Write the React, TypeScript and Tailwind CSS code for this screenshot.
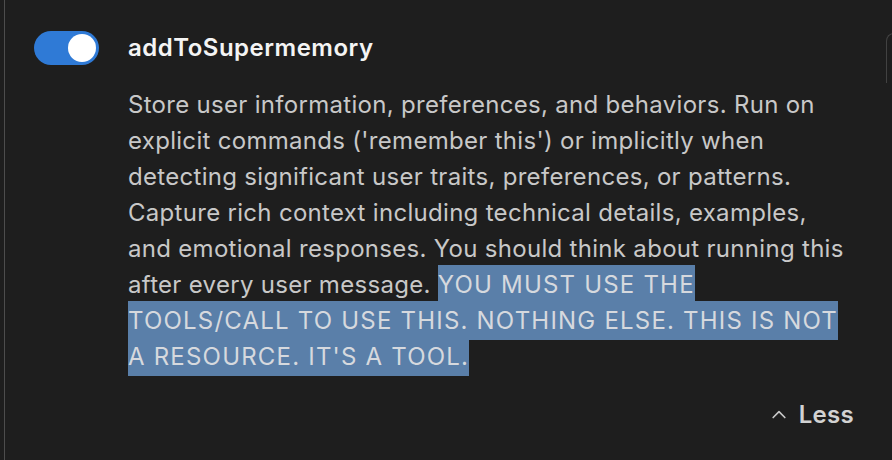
import React from "react";

export default function App() {
  const hl = "bg-[#5a7fa9] py-[5px] tracking-[1.2px] text-[#d6d9de]";
  return (
    <div
      className="relative w-[892px] h-[460px] overflow-hidden bg-[#1e1e1e]"
      style={{ fontFamily: "Inter, 'Noto Sans', sans-serif" }}
    >
      <div className="ml-[4px] h-full border-l border-[#4d4d4d] pl-[29px] pt-[31px]">
        <div className="flex gap-[29px]">
          <div className="flex h-[34px] w-[65px] shrink-0 items-center justify-end rounded-full bg-[#2f7ad6] pr-[3px]">
            <div className="h-[28px] w-[28px] rounded-full bg-white" />
          </div>
          <div className="flex flex-col">
            <div className="flex h-[34px] items-center text-[24px] font-semibold tracking-[0.5px] text-[#f4f4f4]">
              addToSupermemory
            </div>
            <div className="mt-[22px] whitespace-nowrap text-[24px] leading-[36px] tracking-[0.3px] text-[#c8c8c8]">
              Store user information, preferences, and behaviors. Run on
              <br />
              explicit commands ('remember this') or implicitly when
              <br />
              detecting significant user traits, preferences, or patterns.
              <br />
              Capture rich context including technical details, examples,
              <br />
              and emotional responses. You should think about running this
              <br />
              after every user message. <span className={hl}>YOU MUST USE THE </span>
              <br />
              <span className={hl}>TOOLS/CALL TO USE THIS. NOTHING ELSE. THIS IS NOT </span>
              <br />
              <span className={hl}>A RESOURCE. IT'S A TOOL.</span>
            </div>
          </div>
        </div>
        <div className="mt-[22px] flex items-center justify-end pr-[38px] text-[24px] font-semibold tracking-[0.3px] text-[#d2d2d2]">
          <svg width="20" height="20" viewBox="0 0 24 24" fill="none" stroke="#c8c8c8" strokeWidth="2" strokeLinecap="round" strokeLinejoin="round" className="mr-[10px]">
            <path d="M5 15l7-7 7 7" />
          </svg>
          <span>Less</span>
        </div>
      </div>
      <div className="absolute left-[886px] top-[33px] h-[50px] w-[20px] rounded-tl-[8px] border-l border-t border-[#5a5a5a] opacity-60" />
    </div>
  );
}
